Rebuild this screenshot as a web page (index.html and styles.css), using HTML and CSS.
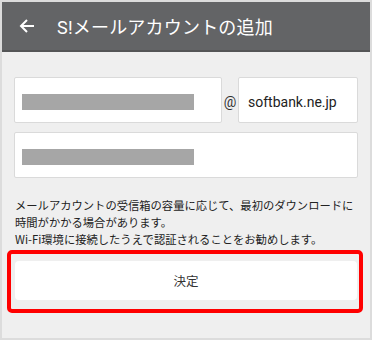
FILE: index.html
```html
<!DOCTYPE html>
<html lang="ja">
<head>
    <meta charset="UTF-8">
    <title>S!メールアカウントの追加</title>
    <link rel="stylesheet" href="styles.css">
</head>
<body>
    <div class="screen">
        <header class="app-bar">
            <svg class="back-icon" width="16" height="16" viewBox="0 0 16 16">
                <path d="M15 8H2.5M8 2L2 8l6 6" fill="none" stroke="#fff" stroke-width="2"/>
            </svg>
            <h1>S!メールアカウントの追加</h1>
        </header>
        <div class="content">
            <div class="address-row">
                <div class="field field-user"><span class="masked"></span></div>
                <span class="at">@</span>
                <div class="field field-domain">softbank.ne.jp</div>
            </div>
            <div class="field field-password"><span class="masked"></span></div>
            <p class="note">メールアカウントの受信箱の容量に応じて、最初のダウンロードに<br>時間がかかる場合があります。<br>Wi-Fi環境に接続したうえで認証されることをお勧めします。</p>
            <div class="highlight">
                <button class="submit-btn">決定</button>
            </div>
        </div>
    </div>
</body>
</html>
```

FILE: styles.css
```css
body {
    margin: 0;
    font-family: 'Roboto', 'Noto Sans CJK JP', sans-serif;
}
.screen {
    width: 372px;
    height: 340px;
    box-sizing: border-box;
    border: 2px solid #dcdcdc;
    background-color: #efefef;
}
.app-bar {
    height: 48px;
    background-color: #636466;
    border-bottom: 2px solid #545556;
    display: flex;
    align-items: center;
    padding-left: 17px;
}
.back-icon {
    flex-shrink: 0;
}
.app-bar h1 {
    margin: 0 0 0 22px;
    color: white;
    font-size: 18px;
    font-weight: 400;
    letter-spacing: 0.2px;
}
.content {
    padding: 25px 12px 0 12px;
}
.address-row {
    display: flex;
    align-items: center;
    margin-bottom: 9px;
}
.field {
    height: 46px;
    box-sizing: border-box;
    background-color: white;
    border: 1px solid #dadada;
    border-radius: 2px;
    display: flex;
    align-items: center;
    padding: 3px 0 0 7px;
}
.field-user {
    flex: 1;
}
.at {
    width: 16px;
    text-align: center;
    font-size: 14px;
    color: #333;
    padding-top: 4px;
}
.field-domain {
    width: 120px;
    padding-left: 9px;
    font-size: 14px;
    color: #222;
}
.masked {
    display: block;
    width: 172px;
    height: 16px;
    background-color: #a6a6a6;
}
.note {
    margin: 19px 0 0 1px;
    font-family: 'Noto Sans CJK JP', sans-serif;
    font-size: 11.3px;
    line-height: 17px;
    color: #222;
}
.highlight {
    margin: 2px -5px 0 -7px;
    border: 4px solid #ff0000;
    border-radius: 5px;
    padding: 7px 2px 9px 4px;
}
.submit-btn {
    display: block;
    width: 100%;
    height: 39px;
    background-color: white;
    border: none;
    border-radius: 4px;
    font-family: 'Noto Sans CJK JP', sans-serif;
    font-size: 12.5px;
    color: #333;
}
```
